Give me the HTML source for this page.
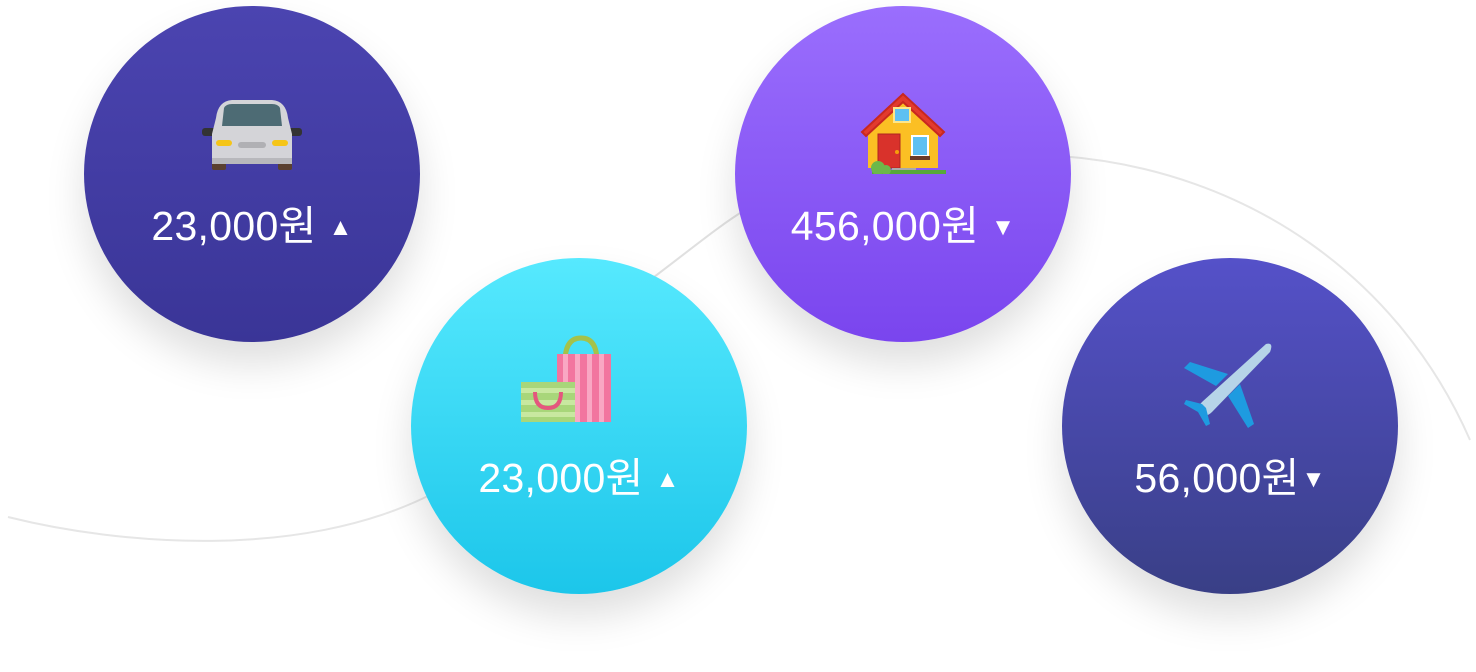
<!DOCTYPE html>
<html><head><meta charset="utf-8"><style>
body{margin:0;width:1476px;height:672px;background:#fff;position:relative;overflow:hidden;font-family:"Liberation Sans","Noto Sans CJK KR",sans-serif}
.c{position:absolute;width:336px;height:336px;border-radius:50%;box-shadow:0 22px 40px rgba(0,0,0,0.13)}
.t{position:absolute;left:0;right:0;text-align:center;color:#fff;font-size:41px;letter-spacing:0.3px}
.t span{font-size:24px;margin-left:12px;vertical-align:5px}
svg.i{position:absolute}
</style></head><body>
<svg width="1476" height="672" style="position:absolute;left:0;top:0">
<path d="M8 517 C120 545 300 560 430 495" fill="none" stroke="#e6e6e6" stroke-width="2"/>
<path d="M650 280 C690 250 720 225 745 210" fill="none" stroke="#e0e0e0" stroke-width="2"/>
<path d="M1060 156 C1250 170 1400 280 1470 440" fill="none" stroke="#e6e6e6" stroke-width="2"/>
</svg>
<div class="c" style="left:84px;top:6px;background:linear-gradient(#4b44b0,#3a3597)">
<svg class="i" style="left:118px;top:92px" width="100" height="80" viewBox="0 0 100 80">
<rect x="0" y="30" width="14" height="8" rx="3" fill="#333"/><rect x="86" y="30" width="14" height="8" rx="3" fill="#333"/>
<rect x="10" y="62" width="14" height="10" rx="2" fill="#5a4030"/><rect x="76" y="62" width="14" height="10" rx="2" fill="#5a4030"/>
<path d="M14 20 Q16 3 30 2 L70 2 Q84 3 86 20 L90 36 L90 62 Q90 66 86 66 L14 66 Q10 66 10 62 L10 36 Z" fill="#d4d4d8"/>
<path d="M22 10 Q24 6 30 6 L70 6 Q76 6 78 10 L80 28 L20 28 Z" fill="#4d6b74"/>
<rect x="10" y="60" width="80" height="6" fill="#b8b8bc"/>
<rect x="14" y="42" width="16" height="6" rx="3" fill="#f5c518"/><rect x="70" y="42" width="16" height="6" rx="3" fill="#f5c518"/>
<rect x="36" y="44" width="28" height="6" rx="3" fill="#b0b0b4"/>
</svg>
<div class="t" style="top:186px">23,000원<span>▲</span></div></div>
<div class="c" style="left:735px;top:6px;background:linear-gradient(#9a6efd,#7a45ee)">
<svg class="i" style="left:125px;top:82px" width="86" height="86" viewBox="0 0 86 86">
<path d="M8 40 L43 8 L78 40 L78 80 L8 80 Z" fill="#fbbf24"/>
<path d="M2 44 L43 6 L84 44 L80 48 L43 14 L6 48 Z" fill="#e23a2e" stroke="#c8281f" stroke-width="2"/>
<rect x="34" y="20" width="16" height="14" fill="#5ec0f2" stroke="#fde68a" stroke-width="2"/>
<rect x="18" y="46" width="22" height="34" fill="#d9322b" stroke="#b02420" stroke-width="1"/>
<circle cx="37" cy="64" r="2" fill="#f59e0b"/>
<rect x="52" y="48" width="16" height="20" fill="#5ec0f2" stroke="#fff" stroke-width="2"/>
<rect x="50" y="68" width="20" height="4" fill="#6b3b2a"/>
<rect x="32" y="80" width="24" height="4" fill="#aaa"/>
<rect x="12" y="82" width="80" height="4" fill="#57a83a"/>
<circle cx="18" cy="80" r="7" fill="#6cb84a"/><circle cx="26" cy="82" r="5" fill="#6cb84a"/>
</svg>
<div class="t" style="top:186px">456,000원<span>▼</span></div></div>
<div class="c" style="left:411px;top:258px;background:linear-gradient(#56e9fe,#1cc6ea)">
<svg class="i" style="left:108px;top:72px" width="96" height="96" viewBox="0 0 96 96">
<path d="M46 32 Q46 8 62 8 Q78 8 78 32" fill="none" stroke="#a4c24a" stroke-width="5"/>
<rect x="38" y="24" width="54" height="68" fill="#f2759f"/>
<g fill="#f9a7c3"><rect x="44" y="24" width="5" height="68"/><rect x="56" y="24" width="5" height="68"/><rect x="68" y="24" width="5" height="68"/><rect x="80" y="24" width="5" height="68"/></g>
<rect x="2" y="52" width="54" height="40" fill="#a8d67a"/>
<g fill="#c8e8a0"><rect x="2" y="58" width="54" height="5"/><rect x="2" y="70" width="54" height="5"/><rect x="2" y="82" width="54" height="5"/></g>
<path d="M16 62 Q16 78 29 78 Q42 78 42 62" fill="none" stroke="#e4577e" stroke-width="4"/>
</svg>
<div class="t" style="top:186px">23,000원<span>▲</span></div></div>
<div class="c" style="left:1062px;top:258px;background:linear-gradient(#5551c9,#393f86)">
<svg class="i" style="left:120px;top:80px" width="96" height="90" viewBox="0 0 96 90">
<path d="M84 6 Q92 4 88 14 L30 74 Q24 80 18 76 Q14 70 20 64 Z" fill="#b6d4e8"/>
<path d="M46 36 L8 24 L2 30 L34 48 Z" fill="#1e9be0"/>
<path d="M58 46 L72 86 L66 90 L46 58 Z" fill="#1e9be0"/>
<path d="M20 66 L4 62 L2 66 L16 74 L24 88 L28 86 L24 70 Z" fill="#1e9be0"/>
</svg>
<div class="t" style="top:186px">56,000원<span style="margin-left:2px">▼</span></div></div>
</body></html>
